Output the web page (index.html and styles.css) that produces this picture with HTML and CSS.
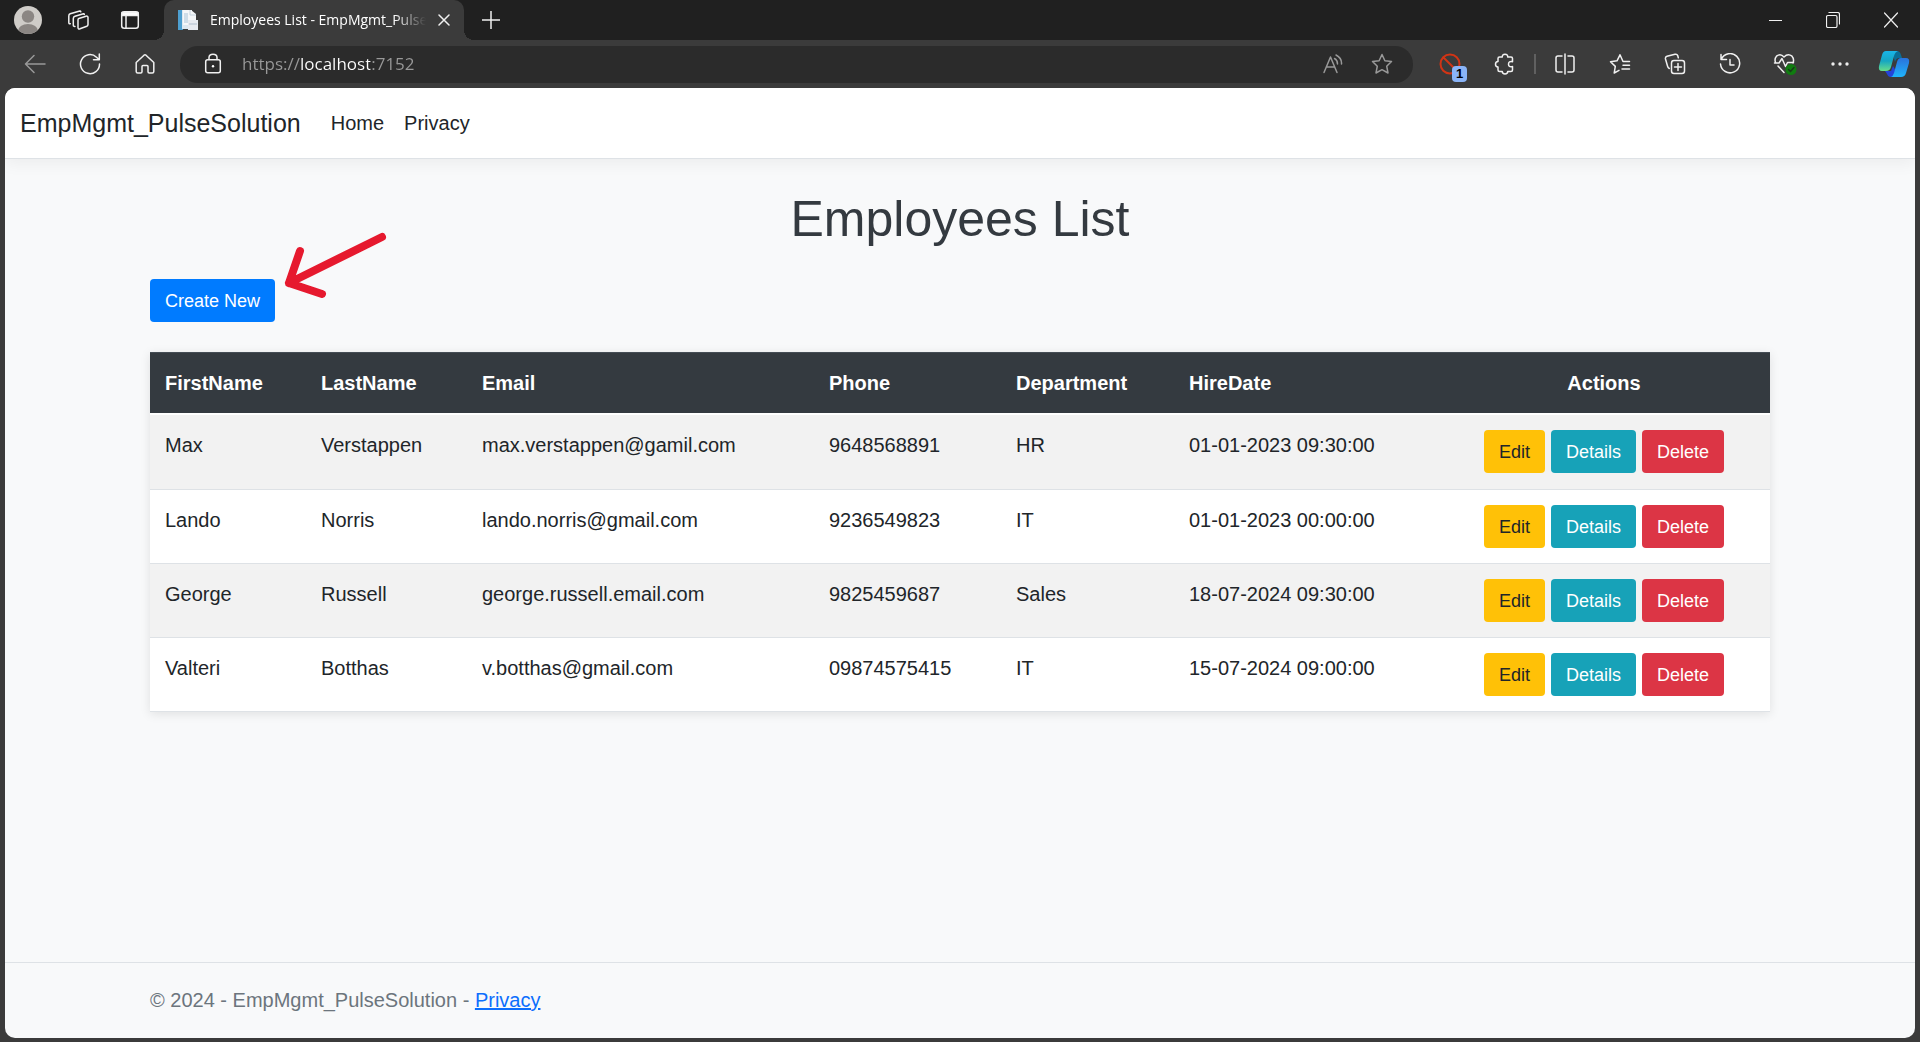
FILE: index.html
```html
<!DOCTYPE html>
<html lang="en">
<head>
<meta charset="utf-8">
<meta name="viewport" content="width=device-width, initial-scale=1">
<title>Employees List - EmpMgmt_PulseSolution</title>
<link rel="stylesheet" href="styles.css">
</head>
<body>
<div class="browser">
  <div class="tabstrip">
    <button class="strip-btn" aria-label="Profile">
      <svg width="28" height="28" viewBox="0 0 28 28"><defs><clipPath id="av"><circle cx="14" cy="14" r="14"/></clipPath></defs><g clip-path="url(#av)"><rect width="28" height="28" fill="#cfccc8"/><circle cx="14" cy="10.500" r="6.200" fill="#8b8683"/><ellipse cx="14" cy="25" rx="10" ry="7" fill="#8b8683"/></g></svg>
    </button>
    <button class="strip-btn" aria-label="Workspaces">
      <svg class="icon" width="22" height="22" viewBox="0 0 22 22"><path d="M10.800 9.500 18 7.200Q20 6.700 20 8.500V15.500Q20 16.700 18.800 17.200L12 19.800Q10 20.400 10 18.600V10.900Q10 9.800 10.800 9.500ZM15.500 4.800 7 7.300Q5.300 7.900 5.300 9.400V16.200Q5.300 17.500 7 17.400M11.800 2 2.200 4.800Q.8 5.400.8 7V13.500Q.8 15 2.300 14.700M15.500 4.800Q16.300 4.600 16.300 5.400M11.800 2Q12.600 1.800 12.800 2.800"/></svg>
    </button>
    <button class="strip-btn" aria-label="Tab actions">
      <svg class="icon" width="20" height="20" viewBox="0 0 20 20"><rect x="1.700" y="1.700" width="16.600" height="16.600" rx="2.500"/><path d="M6 6V18"/><path d="M2 2.500H18V5.500H2Z" fill="#fff"/></svg>
    </button>
    <div class="tab">
      <svg width="20" height="20" viewBox="0 0 20 20"><path d="M0 0H5V20H0Z" fill="#4d9fd0"/><path d="M4 0H14V19H4Z" fill="#dce8f1"/><path d="M5 0H13L18 4V15H5Z" fill="#f5f7f9"/><path d="M6 3H10V13H6Z" fill="#cfdde8"/><path d="M10 10H20V20H10Z" fill="#e6eaf0"/><path d="M11 14H19" stroke="#aebdcc"/><path d="M12 0V5H18" stroke="#c6d4df" fill="none"/></svg>
      <span class="tab-title">Employees List - EmpMgmt_PulseSolution</span>
      <button class="tab-close" aria-label="Close tab"><svg class="icon" width="12" height="12" viewBox="0 0 12 12"><path d="M1 1 11 11M11 1 1 11"/></svg></button>
    </div>
    <button class="new-tab" aria-label="New tab"><svg class="icon" width="18" height="18" viewBox="0 0 18 18"><path d="M9 0V18M0 9H18"/></svg></button>
    <div class="window-controls">
      <button aria-label="Minimize"><svg class="icon crisp" width="13" height="13" viewBox="0 0 13 13"><path d="M0 6.500H13"/></svg></button>
      <button aria-label="Restore"><svg class="icon thin" width="14" height="16" viewBox="0 0 14 16"><rect x=".5" y="3.500" width="10.500" height="12" rx="1.500"/><path d="M3 .5H11.500Q13.500.5 13.500 2.500V12"/></svg></button>
      <button aria-label="Close window"><svg class="icon thin" width="14" height="16" viewBox="0 0 14 16"><path d="M.5 1 13.500 15M13.500 1 .5 15"/></svg></button>
    </div>
  </div>

  <div class="toolbar">
    <button class="tool" aria-label="Back"><svg class="icon dim" width="22" height="22" viewBox="0 0 22 22"><path d="M21 11H1.500M10 2.500 1.500 11 10 19.500"/></svg></button>
    <button class="tool" aria-label="Refresh"><svg class="icon" width="22" height="22" viewBox="0 0 22 22"><path d="M20.500 11A9.500 9.500 0 1 1 17.500 4.200L20 6.500M20.300 1V6.700H14.500"/></svg></button>
    <button class="tool" aria-label="Home"><svg class="icon" width="22" height="22" viewBox="0 0 22 22"><path d="M2.200 9.500 10 2.200Q11 1.400 12 2.200L19.800 9.500V18.500Q19.800 20 18.300 20H15.200Q14 20 14 18.800V13.500Q14 12.500 13 12.500H9Q8 12.500 8 13.500V18.800Q8 20 6.800 20H3.700Q2.200 20 2.200 18.500Z"/></svg></button>
    <div class="address">
      <svg class="icon" width="18" height="22" viewBox="0 0 18 22"><rect x="1.700" y="6.700" width="14.600" height="13" rx="2"/><path d="M5 6.500V4.500Q5 1.200 9 1.200T13 4.500V6.500"/><circle cx="9" cy="13.200" r="1.200" fill="#fff" stroke="none"/></svg>
      <input class="url" type="text" aria-label="Address" value="https://localhost:7152">
      <button aria-label="Read aloud"><svg class="icon dim" width="20" height="20" viewBox="0 0 20 20"><path d="M1 18.500 7.500 3 14 18.500M3.300 13H11.700M11.500 4.500Q14.500 6 14.500 10M13 1Q19 4 18.500 10"/></svg></button>
      <button aria-label="Add to favorites"><svg class="icon dim" width="22" height="22" viewBox="0 0 22 22"><path d="M11 1.500 13.900 7.700 20.500 8.500 15.700 13.200 17 20 11 16.700 5 20 6.300 13.200 1.500 8.500 8.100 7.700Z"/></svg></button>
    </div>
    <button class="tool" aria-label="Blocker extension, 1 item">
      <svg class="icon" width="22" height="22" viewBox="0 0 22 22"><g stroke="#d13415" stroke-width="2"><circle cx="11" cy="11" r="9.500"/><path d="M4.500 4.500 17 17"/></g></svg>
      <span class="badge">1</span>
    </button>
    <button class="tool" aria-label="Extensions"><svg class="icon" width="22" height="22" viewBox="0 0 22 22"><path d="M5.500 4H8.300Q8 1.200 11 1.200T13.700 4H17Q18.500 4 18.500 5.500V8.700Q14.500 8 14.500 11.200T18.500 13.500V17Q18.500 18.500 17 18.500H13.700Q13.700 20.900 11 20.900T8.300 18.500H5.500Q4 18.500 4 17V14Q1.500 13.700 1.500 11.200T4 8.500V5.500Q4 4 5.500 4"/></svg></button>
    <span class="divider"></span>
    <button class="tool" aria-label="Split screen"><svg class="icon" width="22" height="22" viewBox="0 0 22 22"><path d="M8 3H4Q2 3 2 5V17Q2 19 4 19H8M14 3H18Q20 3 20 5V17Q20 19 18 19H14M11 1V21"/></svg></button>
    <button class="tool" aria-label="Favorites"><svg class="icon" width="22" height="22" viewBox="0 0 22 22"><path d="M20.500 8.500H14L11 1.800 8 7.800 1.500 8.700 6.300 13.400 5.200 20 10 17.300M14 12.200H20.500M13 16H20.500"/></svg></button>
    <button class="tool" aria-label="Collections"><svg class="icon" width="22" height="22" viewBox="0 0 22 22"><rect x="7.500" y="7.500" width="13" height="13" rx="2.500"/><path d="M14 10.500V17.500M10.500 14H17.500M5.300 15.500Q3.900 14.700 3.500 13L1.500 6Q1 4 3 3.300L11 1.300Q13 .8 13.700 2.500L14.300 4.800"/></svg></button>
    <button class="tool" aria-label="History"><svg class="icon" width="22" height="22" viewBox="0 0 22 22"><path d="M2 1.500V6.500H7.500M2.300 6.300A9.600 9.600 0 1 1 1.500 11M11 6.500V12H15"/></svg></button>
    <button class="tool" aria-label="Browser essentials"><svg class="icon" width="24" height="24" viewBox="0 0 24 24"><path d="M2.500 10.500Q1.200 6.800 3.500 4.200 7.500 1 11 5 15 1 19 4.200 21.500 7 20 11M5 14 11 20.500M1.500 11H6L9 6.500 12.500 14.500 14.500 10.500H20.500"/><circle cx="18" cy="17.500" r="5.500" fill="#107c10" stroke="none"/><path d="M15.500 17.500 17.500 19.500 21 15.500" stroke="#173d17"/></svg></button>
    <button class="tool" aria-label="Settings and more"><svg width="18" height="6" viewBox="0 0 18 6" fill="#eee"><circle cx="2" cy="3" r="1.700"/><circle cx="9" cy="3" r="1.700"/><circle cx="16" cy="3" r="1.700"/></svg></button>
    <button class="tool copilot" aria-label="Copilot">
      <svg width="32" height="28" viewBox="0 0 32 28"><defs><linearGradient id="c1" x2="0" y2="1"><stop stop-color="#19b5e8"/><stop offset=".5" stop-color="#16a6c2"/><stop offset="1" stop-color="#67dd8a"/></linearGradient><linearGradient id="c2" x2="0" y2="1"><stop stop-color="#2a72dc"/><stop offset="1" stop-color="#1fb4fb"/></linearGradient></defs><path d="M14 1H19Q22 1 23 5L24 8H21Q18 8 17 12Z" fill="#0a6d96"/><path d="M7 21H13L15 16 18 21 16 27H12Q10 27 9 24Z" fill="#2444d8"/><path d="M8 1H20Q17 2 16 6L13 17Q12 21 8 21H4Q0 21 1 16L4 5Q5 1 8 1Z" fill="url(#c1)"/><path d="M23 8H28Q32 8 31 13L28 23Q27 27 23 27H13Q15 26 16 23L19 12Q20 8 23 8Z" fill="url(#c2)"/></svg>
    </button>
  </div>

  <div class="page">
    <header class="site-header">
      <nav class="site-nav">
        <a class="brand" href="#">EmpMgmt_PulseSolution</a>
        <a href="#">Home</a>
        <a href="#">Privacy</a>
      </nav>
    </header>

    <main class="container">
      <h1>Employees List</h1>
      <div class="actions">
        <button class="btn btn-primary">Create New</button>
        <svg class="arrow" width="112" height="74" viewBox="0 0 112 74" aria-hidden="true"><path d="M102 7 9 53M20 21 9 53 42 64"/></svg>
      </div>
      <table>
        <colgroup><col class="c-first"><col class="c-last"><col class="c-email"><col class="c-phone"><col class="c-dept"><col class="c-hire"><col></colgroup>
        <thead>
          <tr><th>FirstName</th><th>LastName</th><th>Email</th><th>Phone</th><th>Department</th><th>HireDate</th><th class="center">Actions</th></tr>
        </thead>
        <tbody>
          <tr><td>Max</td><td>Verstappen</td><td>max.verstappen@gamil.com</td><td>9648568891</td><td>HR</td><td>01-01-2023 09:30:00</td>
            <td><div class="row-actions"><button class="btn btn-warning">Edit</button><button class="btn btn-info">Details</button><button class="btn btn-danger">Delete</button></div></td></tr>
          <tr><td>Lando</td><td>Norris</td><td>lando.norris@gmail.com</td><td>9236549823</td><td>IT</td><td>01-01-2023 00:00:00</td>
            <td><div class="row-actions"><button class="btn btn-warning">Edit</button><button class="btn btn-info">Details</button><button class="btn btn-danger">Delete</button></div></td></tr>
          <tr><td>George</td><td>Russell</td><td>george.russell.email.com</td><td>9825459687</td><td>Sales</td><td>18-07-2024 09:30:00</td>
            <td><div class="row-actions"><button class="btn btn-warning">Edit</button><button class="btn btn-info">Details</button><button class="btn btn-danger">Delete</button></div></td></tr>
          <tr><td>Valteri</td><td>Botthas</td><td>v.botthas@gmail.com</td><td>09874575415</td><td>IT</td><td>15-07-2024 09:00:00</td>
            <td><div class="row-actions"><button class="btn btn-warning">Edit</button><button class="btn btn-info">Details</button><button class="btn btn-danger">Delete</button></div></td></tr>
        </tbody>
      </table>
    </main>

    <footer class="site-footer">
      <div class="container">© 2024 - EmpMgmt_PulseSolution - <a href="#">Privacy</a></div>
    </footer>
  </div>
</div>
</body>
</html>
```
FILE: styles.css
```css
* { box-sizing: border-box; }
body {
  margin: 0;
  background: #3b3b3b;
  color: #212529;
  font: 20px/30px "Liberation Sans", Arial, sans-serif;
}
button {
  border: 0;
  padding: 0;
  background: none;
  color: inherit;
  font: inherit;
}
.browser {
  display: flex;
  flex-direction: column;
  min-height: 100vh;
}

/* Browser frame */
.tabstrip, .toolbar, .tab, .address, .window-controls { display: flex; align-items: center; }
.tabstrip button, .tool, .address button {
  display: flex;
  align-items: center;
  justify-content: center;
}
.icon {
  fill: none;
  stroke: #f0f0f0;
  stroke-width: 1.5;
  stroke-linecap: round;
  stroke-linejoin: round;
}
.icon.dim { stroke: #999; }
.icon.thin { stroke-width: 1.2; }
.crisp { shape-rendering: crispEdges; }
.tabstrip {
  height: 40px;
  padding-left: 2px;
  background: #202020;
}
.strip-btn { width: 51px; height: 40px; }
.tab {
  position: relative;
  width: 300px;
  height: 40px;
  margin-left: 9px;
  padding: 0 14px;
  gap: 12px;
  border-radius: 10px 10px 0 0;
  background: #3b3b3b;
  color: #fff;
  font: 14px/20px "Open Sans", "Noto Sans", sans-serif;
}
.tab::before, .tab::after {
  content: "";
  position: absolute;
  bottom: 0;
  width: 10px;
  height: 10px;
}
.tab::before { right: 100%; background: radial-gradient(circle at 0 0, transparent 10px, #3b3b3b 10px); }
.tab::after { left: 100%; background: radial-gradient(circle at 100% 0, transparent 10px, #3b3b3b 10px); }
.tab-title {
  flex: 1;
  min-width: 0;
  overflow: hidden;
  white-space: nowrap;
  -webkit-mask-image: linear-gradient(to left, transparent, #000 32px);
  mask-image: linear-gradient(to left, transparent, #000 32px);
}
.new-tab { width: 54px; height: 40px; }
.window-controls { margin-left: auto; }
.window-controls button { width: 58px; height: 40px; }

.toolbar {
  height: 48px;
  padding-left: 7px;
}
.tool {
  position: relative;
  flex: none;
  width: 55px;
  height: 48px;
}
.tool.copilot { width: 53px; }
.address {
  flex: 1;
  height: 37px;
  margin: 0 9px 0 8px;
  padding: 0 7px 0 24px;
  gap: 20px;
  border-radius: 18px;
  background: #2b2b2b;
}
.address button { width: 49px; height: 37px; }
.address button + button { margin-left: -20px; }
.url {
  flex: 1;
  min-width: 0;
  height: 37px;
  padding: 0 0 2px;
  border: 0;
  outline: 0;
  background: linear-gradient(90deg, #999 58px, #fff 58px 128px, #999 128px);
  -webkit-background-clip: text;
  background-clip: text;
  color: transparent;
  font: 17px/24px "Open Sans", "Noto Sans", sans-serif;
}
.badge {
  position: absolute;
  left: 30px;
  top: 26px;
  width: 15px;
  height: 16px;
  border-radius: 4px;
  background: #8ab4f8;
  color: #000;
  font: bold 13px/16px "Liberation Sans", Arial, sans-serif;
}
.divider {
  width: 2px;
  height: 20px;
  margin: 0 1px 0 2px;
  background: #606060;
}

/* Site */
.page {
  display: flex;
  flex-direction: column;
  flex: 1;
  margin: 0 5px 4px;
  overflow: hidden;
  border-radius: 10px;
  background: #f8f9fa;
}
.site-header {
  border-bottom: 1px solid #dee2e6;
  background: #fff;
  box-shadow: 0 5px 15px rgba(0, 0, 0, .05);
}
.site-nav {
  display: flex;
  align-items: center;
  height: 70px;
  padding: 0 15px;
  gap: 20px;
}
.site-nav a { color: #212529; text-decoration: none; }
.site-nav .brand {
  margin-right: 10px;
  font-size: 25px;
}
.container {
  width: 100%;
  max-width: 1650px;
  margin: 0 auto;
  padding: 0 15px;
}
main.container { flex: 1; padding-top: 30px; }
h1 {
  margin: 0 0 30px;
  color: #343a40;
  font-size: 50px;
  font-weight: 400;
  line-height: 60px;
  text-align: center;
}
.actions {
  position: relative;
  display: flex;
  margin-bottom: 30px;
}
.arrow {
  position: absolute;
  left: 130px;
  top: -49px;
  fill: none;
  stroke: #e6192e;
  stroke-width: 8;
  stroke-linecap: round;
  stroke-linejoin: round;
}
.btn {
  padding: 9px 15px 7px;
  border-radius: 4px;
  color: #fff;
  font-size: 18px;
  line-height: 27px;
}
.btn-primary { background: #007bff; }
.btn-warning { background: #ffc107; color: #212529; }
.btn-info { background: #17a2b8; }
.btn-danger { background: #dc3545; }

table {
  width: 100%;
  table-layout: fixed;
  border-spacing: 0;
  background: #fff;
  box-shadow: 0 2px 10px rgba(0, 0, 0, .1);
}
.c-first { width: 156px; }
.c-last { width: 161px; }
.c-email { width: 347px; }
.c-phone { width: 187px; }
.c-dept { width: 173px; }
.c-hire { width: 264px; }
th, td {
  padding: 15px;
  text-align: left;
  vertical-align: top;
}
th {
  border-top: 1px solid #454d55;
  border-bottom: 2px solid #fff;
  background: #343a40;
  background-clip: padding-box;
  color: #fff;
}
th.center { text-align: center; }
td { border-bottom: 1px solid #dee2e6; }
tbody tr:first-child td { padding-bottom: 16px; }
tbody tr:nth-child(odd) { background: #f2f2f2; }
.row-actions {
  display: flex;
  justify-content: center;
  gap: 6px;
}
.site-footer {
  border-top: 1px solid #dee2e6;
  color: #6c757d;
  line-height: 75px;
}
.site-footer a { color: #0d6efd; }
```
